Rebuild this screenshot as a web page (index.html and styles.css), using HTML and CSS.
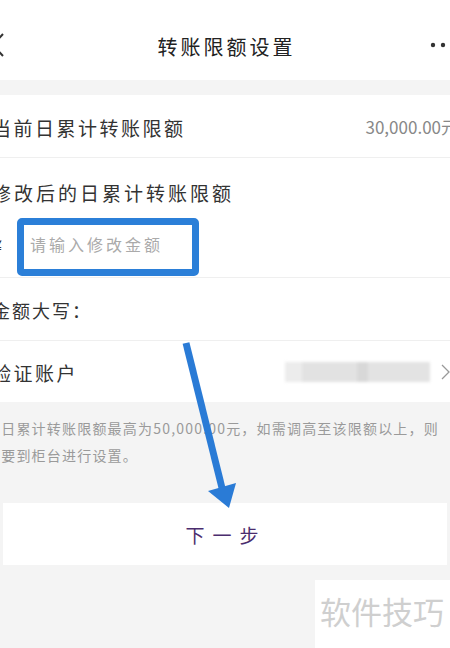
FILE: index.html
```html
<!DOCTYPE html>
<html lang="zh-CN">
<head>
    <meta charset="UTF-8">
    <meta name="viewport" content="width=device-width, initial-scale=1.0">
    <title>转账限额设置</title>
<link rel="stylesheet" href="styles.css">
</head>
<body>
    <div class="screen">
        <!-- 상단 네비게이션 -->
        <div class="nav">
            <svg class="back" width="14" height="24" viewBox="0 0 14 24"><polyline points="12,1 2,12 12,23" fill="none" stroke="#333" stroke-width="2"/></svg>
            <div class="title">转账限额设置</div>
            <svg class="more" width="26" height="6" viewBox="0 0 26 6"><circle cx="3" cy="3" r="2.2" fill="#333"/><circle cx="13" cy="3" r="2.2" fill="#333"/><circle cx="23" cy="3" r="2.2" fill="#333"/></svg>
        </div>

        <div class="form">
            <div class="row">
                <span class="label">当前日累计转账限额</span>
                <span class="amount">30,000.00元</span>
            </div>
            <div class="row-input">
                <div class="label">修改后的日累计转账限额</div>
                <div class="input-line">
                    <span class="yen">¥</span>
                    <div class="input-box">请输入修改金额</div>
                </div>
            </div>
            <div class="row">
                <span class="label small">金额大写：</span>
            </div>
            <div class="row last">
                <span class="label">验证账户</span>
                <span class="account">
                    <span class="blur"></span>
                    <svg width="9" height="16" viewBox="0 0 9 16"><polyline points="1,1 8,8 1,15" fill="none" stroke="#999" stroke-width="1.3"/></svg>
                </span>
            </div>
        </div>

        <p class="note">当日累计转账限额最高为50,000.00元，如需调高至该限额以上，则<br>需要到柜台进行设置。</p>

        <button class="next">下一步</button>
    </div>

    <!-- 화살표 표시 -->
    <svg class="arrow" width="450" height="648" viewBox="0 0 450 648">
        <line x1="186" y1="343" x2="222" y2="488" stroke="#2a7bd6" stroke-width="7"/>
        <polygon points="208,491 236,483 229,508" fill="#2a7bd6"/>
    </svg>

    <div class="watermark">软件技巧</div>
</body>
</html>
```

FILE: styles.css
```css
body{
    margin: 0;
    width: 450px;
    height: 648px;
    overflow: hidden;
    background: #f4f4f4;
    font-family: "Noto Sans CJK SC", "Noto Sans", sans-serif;
    color: #333;
    position: relative;
}
.screen{
    width: 494px;
    margin-left: -22px;
}
.nav{
    height: 80px;
    background: #fff;
    display: grid;
    grid-template-columns: 60px 1fr 60px;
    align-items: center;
    padding: 0 14px;
    box-sizing: border-box;
}
.nav .back{
    margin-left: -1px;
    margin-top: 10px;
}
.nav .title{
    text-align: center;
    font-size: 20px;
    letter-spacing: 3px;
    padding-left: 3px;
    margin-top: 12px;
    color: #222;
}
.nav .more{
    justify-self: end;
    margin-right: 2px;
    margin-top: 10px;
}
.form{
    margin-top: 15px;
    background: #fff;
}
.row{
    height: 62px;
    padding: 0 14px;
    display: flex;
    align-items: center;
    justify-content: space-between;
    border-bottom: 1px solid #efefef;
}
.row.last{
    height: 61px;
    border-bottom: none;
}
.label{
    font-size: 19px;
    letter-spacing: 2.5px;
    margin-top: 2px;
}
.label.small{
    font-size: 18px;
    letter-spacing: 2px;
}
.amount{
    font-size: 17px;
    color: #888;
}
.row-input{
    padding: 22px 14px 1px;
    border-bottom: 1px solid #efefef;
}
.row-input .label{
    line-height: 26px;
    letter-spacing: 3px;
    margin-top: 0;
}
.input-line{
    display: flex;
    align-items: center;
    gap: 12px;
    margin-top: 12px;
}
.yen{
    width: 13px;
    font-size: 18px;
    margin-top: -4px;
}
.input-box{
    width: 182px;
    height: 58px;
    box-sizing: border-box;
    border: 7px solid #2b7fd8;
    border-radius: 5px;
    padding: 0 6px 6px;
    display: flex;
    align-items: center;
    font-size: 16px;
    letter-spacing: 3px;
    color: #aaa;
}
.account{
    display: flex;
    align-items: center;
    gap: 11px;
    margin-right: 8px;
}
.blur{
    width: 145px;
    height: 20px;
    background: linear-gradient(90deg, #ececec 0 12%, #e2e2e2 12% 50%, #d8d8d8 50% 57%, #e3e3e3 57% 100%);
    filter: blur(1.5px);
}
.note{
    margin: 0;
    padding: 13px 0 0 8px;
    font-size: 14px;
    line-height: 27px;
    letter-spacing: 1.2px;
    color: #9a9a9a;
    white-space: nowrap;
}
.next{
    display: block;
    width: 444px;
    height: 62px;
    margin: 34px 0 0 25px;
    border: none;
    background: #fff;
    font-family: inherit;
    font-size: 19px;
    letter-spacing: 8px;
    padding-left: 8px;
    color: #4b2d6e;
}
.arrow{
    position: absolute;
    top: 0;
    left: 0;
    pointer-events: none;
}
.watermark{
    position: absolute;
    right: 0;
    top: 580px;
    width: 135px;
    height: 68px;
    background: #fff;
    font-size: 31px;
    color: #cfcfcf;
    white-space: nowrap;
    padding: 8px 0 0 5px;
    box-sizing: border-box;
}
```
